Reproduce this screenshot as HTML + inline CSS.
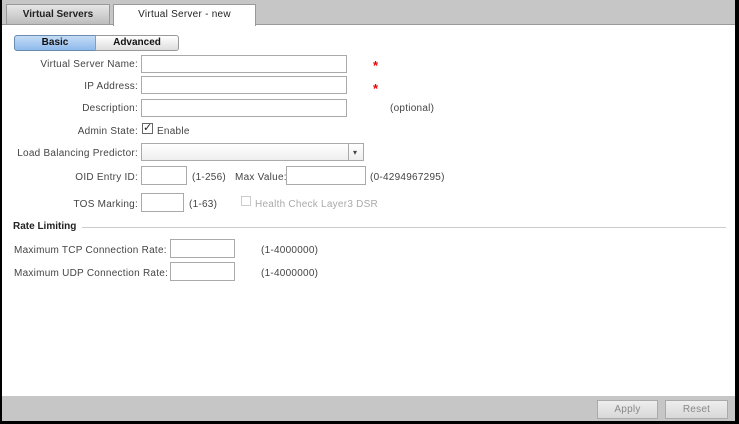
<!DOCTYPE html><html><head><style>
body{margin:0;width:739px;height:424px;overflow:hidden;background:#000;font-family:"Liberation Sans",sans-serif;font-size:10px;color:#444;letter-spacing:0.25px}
.f{position:absolute;left:2px;top:0;width:733px;height:421px;background:#fff}
.a{position:absolute}
.in{position:absolute;border:1px solid #aaa;background:#fff;box-sizing:border-box}
.l{position:absolute;text-align:right;white-space:nowrap}
.s{position:absolute;color:#e00;font-size:13px;font-weight:bold}
</style></head><body><div class="f">
<div class="a" style="left:0;top:0;width:733px;height:24px;background:#c6c6c6;border-bottom:1px solid #999"></div>
<div class="a" style="left:4px;top:4px;width:102px;height:19px;background:linear-gradient(#e6e6e6,#bdbdbd);border:1px solid #999;border-bottom:none;font-weight:bold;text-align:center;line-height:19px;font-size:10px;color:#222;letter-spacing:0">Virtual Servers</div>
<div class="a" style="left:111px;top:4px;width:141px;height:21px;background:#fff;border:1px solid #999;border-bottom:none;text-align:center;line-height:20px;color:#222">Virtual Server - new</div>
<div class="a" style="left:12px;top:35px;width:80px;height:14px;border:1px solid #6a8ab0;border-radius:3px 0 0 3px;background:linear-gradient(#c4dcf6,#8fbaec);font-weight:bold;text-align:center;line-height:14px;color:#111;letter-spacing:0">Basic</div>
<div class="a" style="left:93px;top:35px;width:82px;height:14px;border:1px solid #999;border-radius:0 3px 3px 0;background:linear-gradient(#fff,#ddd);font-weight:bold;text-align:center;line-height:14px;color:#111;letter-spacing:0">Advanced</div>
<div class="l" style="right:597px;top:59px">Virtual Server Name:</div>
<div class="in" style="left:139px;top:55px;width:206px;height:18px"></div><div class="s" style="left:371px;top:58px">*</div>
<div class="l" style="right:597px;top:81px">IP Address:</div>
<div class="in" style="left:139px;top:76px;width:206px;height:18px"></div><div class="s" style="left:371px;top:81px">*</div>
<div class="l" style="right:597px;top:103px">Description:</div>
<div class="in" style="left:139px;top:99px;width:206px;height:18px"></div>
<div class="a" style="left:388px;top:103px">(optional)</div>
<div class="l" style="right:597px;top:126px">Admin State:</div>
<div class="in" style="left:140px;top:123px;width:11px;height:11px;border-color:#666;font-size:11px;line-height:9px;text-align:center;color:#222">✓</div>
<div class="a" style="left:155px;top:126px">Enable</div>
<div class="l" style="right:597px;top:148px">Load Balancing Predictor:</div>
<div class="in" style="left:139px;top:143px;width:223px;height:18px;background:linear-gradient(#fff,#eee)"></div>
<div class="a" style="left:346px;top:144px;width:1px;height:16px;background:#aaa"></div>
<div class="a" style="left:351px;top:148px;font-size:8px">▾</div>
<div class="l" style="right:597px;top:172px">OID Entry ID:</div>
<div class="in" style="left:139px;top:166px;width:46px;height:19px"></div>
<div class="a" style="left:190px;top:172px">(1-256)</div>
<div class="a" style="left:233px;top:172px">Max Value:</div>
<div class="in" style="left:284px;top:166px;width:80px;height:19px"></div>
<div class="a" style="left:368px;top:172px">(0-4294967295)</div>
<div class="l" style="right:597px;top:199px">TOS Marking:</div>
<div class="in" style="left:139px;top:193px;width:43px;height:19px"></div>
<div class="a" style="left:187px;top:199px">(1-63)</div>
<div class="in" style="left:239px;top:196px;width:10px;height:10px;border-color:#ccc"></div>
<div class="a" style="left:253px;top:199px;color:#aaa">Health Check Layer3 DSR</div>
<div class="a" style="left:11px;top:221px;font-weight:bold;color:#222;letter-spacing:0">Rate Limiting</div>
<div class="a" style="left:80px;top:227px;width:644px;height:1px;background:#ccc"></div>
<div class="a" style="left:12px;top:245px">Maximum TCP Connection Rate:</div>
<div class="in" style="left:168px;top:239px;width:65px;height:19px"></div>
<div class="a" style="left:259px;top:245px">(1-4000000)</div>
<div class="a" style="left:12px;top:268px">Maximum UDP Connection Rate:</div>
<div class="in" style="left:168px;top:262px;width:65px;height:19px"></div>
<div class="a" style="left:259px;top:268px">(1-4000000)</div>
<div class="a" style="left:0;top:396px;width:733px;height:25px;background:#c6c6c6"></div>
<div class="a" style="left:595px;top:400px;width:59px;height:17px;border:1px solid #aaa;background:linear-gradient(#eee,#d8d8d8);text-align:center;line-height:17px;color:#888">Apply</div>
<div class="a" style="left:663px;top:400px;width:61px;height:17px;border:1px solid #aaa;background:linear-gradient(#eee,#d8d8d8);text-align:center;line-height:17px;color:#888">Reset</div>
</div></body></html>
